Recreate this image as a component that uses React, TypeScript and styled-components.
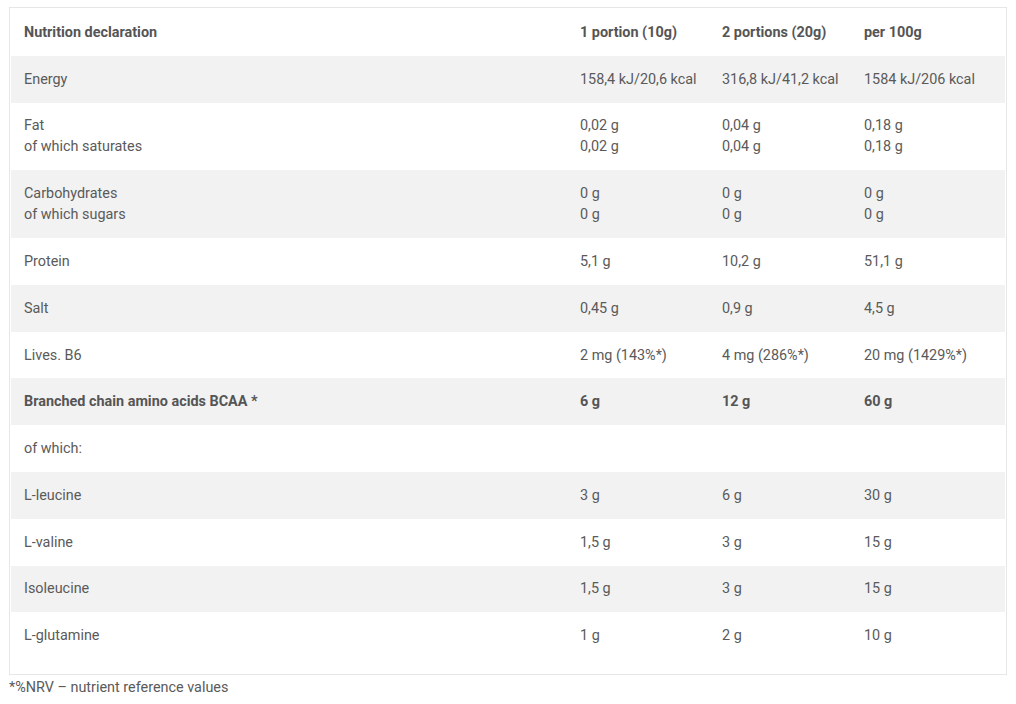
import React from "react";
import styled, { createGlobalStyle } from "styled-components";

const Global = createGlobalStyle`
  html, body { margin: 0; padding: 0; background: #fff; }
  body { font-family: Roboto, "Noto Sans", Arial, sans-serif; }
`;

const Page = styled.div`
  padding: 7px 9px 0;
  color: #585858;
  font-size: 14.4px;
  line-height: 21px;
`;

const Box = styled.div`
  border: 1px solid #e6e6e6;
  padding: 1px 1px 15px;
`;

const Table = styled.table`
  width: 100%;
  border-collapse: collapse;
  table-layout: fixed;
`;

const Row = styled.tr<{ $striped?: boolean }>`
  background: ${(p) => (p.$striped ? "#f2f2f2" : "transparent")};
`;

const Cell = styled.td<{ $bold?: boolean }>`
  padding: 12.9px 13px;
  vertical-align: top;
  font-weight: ${(p) => (p.$bold ? 700 : 400)};
  color: ${(p) => (p.$bold ? "#555" : "#5a5a5a")};
  white-space: nowrap;
`;

const Col = styled.col<{ $w: number }>`
  width: ${(p) => p.$w}px;
`;

const Footer = styled.div`
  margin-top: 2px;
  color: #5a5a5a;
`;

type R = { cells: string[][]; bold?: boolean };

const rows: R[] = [
  { cells: [["Nutrition declaration"], ["1 portion (10g)"], ["2 portions (20g)"], ["per 100g"]], bold: true },
  { cells: [["Energy"], ["158,4 kJ/20,6 kcal"], ["316,8 kJ/41,2 kcal"], ["1584 kJ/206 kcal"]] },
  { cells: [["Fat", "of which saturates"], ["0,02 g", "0,02 g"], ["0,04 g", "0,04 g"], ["0,18 g", "0,18 g"]] },
  { cells: [["Carbohydrates", "of which sugars"], ["0 g", "0 g"], ["0 g", "0 g"], ["0 g", "0 g"]] },
  { cells: [["Protein"], ["5,1 g"], ["10,2 g"], ["51,1 g"]] },
  { cells: [["Salt"], ["0,45 g"], ["0,9 g"], ["4,5 g"]] },
  { cells: [["Lives. B6"], ["2 mg (143%*)"], ["4 mg (286%*)"], ["20 mg (1429%*)"]] },
  { cells: [["Branched chain amino acids BCAA *"], ["6 g"], ["12 g"], ["60 g"]], bold: true },
  { cells: [["of which:"], [""], [""], [""]] },
  { cells: [["L-leucine"], ["3 g"], ["6 g"], ["30 g"]] },
  { cells: [["L-valine"], ["1,5 g"], ["3 g"], ["15 g"]] },
  { cells: [["Isoleucine"], ["1,5 g"], ["3 g"], ["15 g"]] },
  { cells: [["L-glutamine"], ["1 g"], ["2 g"], ["10 g"]] },
];

export default function App() {
  return (
    <Page>
      <Global />
      <Box>
        <Table>
          <colgroup>
            <Col $w={556} />
            <Col $w={142} />
            <Col $w={142} />
            <Col $w={154} />
          </colgroup>
          <tbody>
            {rows.map((r, i) => (
              <Row key={i} $striped={i % 2 === 1}>
                {r.cells.map((lines, j) => (
                  <Cell key={j} $bold={r.bold}>
                    {lines.map((l, k) => (
                      <React.Fragment key={k}>
                        {k > 0 && <br />}
                        {l}
                      </React.Fragment>
                    ))}
                  </Cell>
                ))}
              </Row>
            ))}
          </tbody>
        </Table>
      </Box>
      <Footer>*%NRV – nutrient reference values</Footer>
    </Page>
  );
}
